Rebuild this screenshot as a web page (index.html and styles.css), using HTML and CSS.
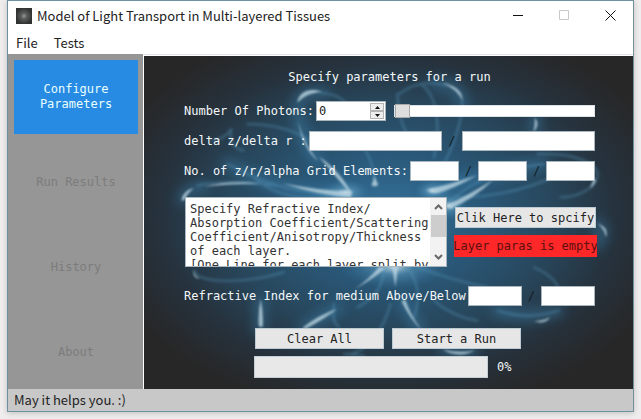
FILE: index.html
```html
<!DOCTYPE html>
<html lang="en">
<head>
<meta charset="utf-8">
<title>Model of Light Transport in Multi-layered Tissues</title>
<link rel="stylesheet" href="styles.css">
</head>
<body>
<div class="window">
  <header class="titlebar">
    <svg class="app-icon" viewBox="0 0 16 16" aria-hidden="true">
      <defs><radialGradient id="glow"><stop offset="0" stop-color="#a4a4a4"/><stop offset=".25" stop-color="#666"/><stop offset="1" stop-color="#303232"/></radialGradient></defs>
      <rect width="16" height="16" fill="url(#glow)"/>
    </svg>
    <h1 class="title">Model of Light Transport in Multi-layered Tissues</h1>
    <div class="caption-buttons">
      <button class="caption" type="button" aria-label="Minimize"><svg viewBox="0 0 11 11"><path d="M0 5.500H10" stroke="#111"/></svg></button>
      <button class="caption" type="button" aria-label="Maximize" disabled><svg viewBox="0 0 11 11"><path d="M.5 .5H9.500V9.500H.5Z" stroke="#c8c8cc"/></svg></button>
      <button class="caption" type="button" aria-label="Close"><svg viewBox="0 0 11 11"><path d="M.5 .5L10.500 10.500M10.500 .5L.5 10.500" stroke="#111"/></svg></button>
    </div>
  </header>
  <nav class="menubar"><button class="menu" type="button">File</button><button class="menu" type="button">Tests</button></nav>
  <div class="content">
    <nav class="sidebar">
      <button class="tab active" type="button">Configure<br>Parameters</button>
      <button class="tab" type="button" disabled>Run Results</button>
      <button class="tab" type="button" disabled>History</button>
      <button class="tab" type="button" disabled>About</button>
    </nav>
    <main class="panel">
      <svg class="backdrop" viewBox="0 6 1467 999" preserveAspectRatio="none" aria-hidden="true">
        <defs>
          <radialGradient id="base" cx=".5" cy=".48" r=".6">
            <stop offset="0" stop-color="#35739c"/><stop offset=".3" stop-color="#2a597a"/><stop offset=".55" stop-color="#28485e"/><stop offset=".78" stop-color="#26323d"/><stop offset="1" stop-color="#272727"/>
          </radialGradient>
          <radialGradient id="hot"><stop offset="0" stop-color="#d4e6ef" stop-opacity=".85"/><stop offset=".35" stop-color="#68a6c8" stop-opacity=".45"/><stop offset="1" stop-color="#397ca5" stop-opacity="0"/></radialGradient>
          <filter id="wide" x="-20%" y="-20%" width="140%" height="140%"><feGaussianBlur stdDeviation="18"/></filter>
          <filter id="faint" x="-20%" y="-20%" width="140%" height="140%"><feGaussianBlur stdDeviation="4"/></filter>
          <filter id="soft" x="-20%" y="-20%" width="140%" height="140%"><feGaussianBlur stdDeviation="2.500"/></filter>
        </defs>
        <rect y="6" width="1467" height="999" fill="url(#base)"/>
        <g fill="none" stroke="#3c87b5" stroke-width="34" stroke-linecap="round" opacity=".42" filter="url(#wide)">
          <path d="M460 150Q475 105 540 118M462 180C470 240 500 290 520 318M250 330C380 400 500 420 620 425M860 410C950 380 1100 340 1200 330M870 90Q950 90 955 150M350 740L348 830M480 820L580 765M780 740Q800 790 830 830M1360 510Q1390 530 1360 570M900 890Q950 905 990 890M115 435Q130 405 180 400M1175 190L1172 230M1060 770Q1150 800 1245 770"/>
        </g>
        <ellipse cx="605" cy="415" rx="75" ry="40" fill="url(#hot)"/>
        <ellipse cx="866" cy="411" rx="55" ry="35" fill="url(#hot)"/>
        <ellipse cx="915" cy="455" rx="55" ry="45" fill="url(#hot)"/>
        <ellipse cx="750" cy="640" rx="160" ry="65" fill="url(#hot)"/>
        <g fill="none" stroke="#5c9dc2" stroke-width="6" stroke-linecap="round" opacity=".45" filter="url(#faint)">
          <path d="M530 116Q580 120 605 145M310 210Q430 212 495 260M200 260Q245 255 262 225M262 225Q250 280 300 290M160 395C230 378 320 385 400 395M250 330C380 405 500 420 620 430M330 370Q400 440 550 430M765 120Q830 70 910 95M830 90C890 130 885 240 870 310M955 140C955 210 925 280 900 330M760 120Q765 230 820 280M665 290Q690 330 692 390M920 440Q1020 350 1200 330M1180 300C1290 295 1370 330 1360 370C1350 405 1300 430 1250 430M940 430Q1100 430 1250 360M150 650C165 690 300 690 420 655M720 640Q720 720 640 760M790 640Q840 700 810 790M820 640Q930 680 1030 700M570 750Q560 800 585 820M740 750Q700 880 620 900M870 740Q930 790 1000 800M1060 770Q1150 800 1245 770M1170 640Q1240 670 1250 720M600 900L660 905"/>
        </g>
        <g fill="#bcd6e2" opacity=".8" filter="url(#soft)">
          <path d="M460 146C464 112 500 100 534 114C504 116 482 124 460 146ZM462 200C474 250 500 295 524 322C494 300 470 255 462 200ZM525 308Q592 352 626 426Q590 385 525 308ZM415 388Q520 410 624 412L620 430Q520 424 415 388ZM180 398Q260 378 350 389Q260 388 180 398ZM845 408Q925 390 1000 364Q925 406 880 418ZM905 455Q980 420 1050 376Q985 438 920 464ZM895 86Q956 98 956 140Q940 106 895 86ZM1172 190Q1190 212 1168 234Q1174 214 1172 190ZM690 365Q696 378 703 392Q693 402 682 393Q690 382 690 365ZM1360 508Q1396 522 1386 550Q1382 526 1360 508ZM112 440Q115 410 150 402Q128 420 122 438ZM705 640L725 642Q680 680 634 704Q675 676 705 640ZM745 640H762L754 700ZM350 735Q359 780 356 818L345 818Q341 780 350 735ZM475 822Q520 784 580 764Q540 796 485 824ZM772 740L784 738Q800 785 834 830Q796 792 772 740ZM895 886Q950 900 994 888Q945 916 895 886ZM1170 802Q1200 800 1218 790Q1206 812 1170 802ZM150 648Q150 668 168 674Q144 672 150 648ZM1350 372Q1364 380 1338 404Z"/>
        </g>
      </svg>
      <form class="form">
        <h2 class="heading">Specify parameters for a run</h2>
        <div class="row">
          <label for="photons">Number Of Photons:</label>
          <span class="spin">
            <input id="photons" class="spin-value" type="text" inputmode="numeric" value="0">
            <span class="steps">
              <button type="button" class="step" aria-label="Increase"><svg viewBox="0 0 5 3"><path d="M0 3L2.500 0L5 3Z"/></svg></button>
              <button type="button" class="step" aria-label="Decrease"><svg viewBox="0 0 5 3"><path d="M0 0L2.500 3L5 0Z"/></svg></button>
            </span>
          </span>
          <input class="slider" type="range" min="0" max="100" value="0" aria-label="Number Of Photons">
        </div>
        <div class="row">
          <label for="dz">delta z/delta r :</label>
          <input id="dz" class="field" type="text"><span class="slash">/</span><input class="field" type="text" aria-label="delta r">
        </div>
        <div class="row">
          <label for="nz">No. of z/r/alpha Grid Elements:</label>
          <input id="nz" class="field" type="text"><span class="slash">/</span><input class="field" type="text" aria-label="r elements"><span class="slash">/</span><input class="field" type="text" aria-label="alpha elements">
        </div>
        <div class="layers">
          <div class="notes">
            <textarea class="notes-text" aria-label="Layer parameters" readonly>Specify Refractive Index/
Absorption Coefficient/Scattering
Coefficient/Anisotropy/Thickness
of each layer.
[One Line for each layer split by</textarea>
            <div class="scrollbar">
              <svg viewBox="0 0 9 6"><path d="M1 5L4.500 1.500L8 5"/></svg>
              <span class="thumb"></span>
              <svg viewBox="0 0 9 6"><path d="M1 1L4.500 4.500L8 1"/></svg>
            </div>
          </div>
          <div class="layer-actions">
            <button class="button specify" type="button">Clik Here to spcify</button>
            <output class="alert">Layer paras is empty</output>
          </div>
        </div>
        <div class="row medium">
          <label for="above">Refractive Index for medium Above/Below</label>
          <input id="above" class="field" type="text"><span class="slash">/</span><input class="field" type="text" aria-label="Below">
        </div>
        <div class="run">
          <div class="actions">
            <button class="button" type="button">Clear All</button>
            <button class="button" type="button">Start a Run</button>
          </div>
          <div class="progress-row">
            <progress id="progress" class="progress" value="0" max="100"></progress>
            <label for="progress">0%</label>
          </div>
        </div>
      </form>
    </main>
  </div>
  <footer class="status">May it helps you. :)</footer>
</div>
</body>
</html>
```
FILE: styles.css
```css
* { box-sizing: border-box; }
html, body { height: 100%; }
body {
  margin: 0;
  padding: 0 7px 7px;
  background: #efeded;
  color: #222;
  font-family: "Noto Sans CJK SC", "Noto Sans", sans-serif;
  font-size: 13px;
}
button, input, textarea { font: inherit; color: inherit; margin: 0; border-radius: 0; }
button { border: 0; padding: 0; background: none; }

.window {
  display: flex;
  flex-direction: column;
  height: 100%;
  border: 1px solid #6f909e;
  background: #fff;
  box-shadow: 0 1px 6px #0003;
}
.titlebar { display: flex; align-items: center; height: 29px; padding-left: 8px; }
.app-icon { width: 16px; height: 16px; margin-right: 5px; }
.title { flex: 1; margin: 0; font-size: 13px; font-weight: 400; white-space: nowrap; }
.caption-buttons { display: flex; }
.caption { display: grid; place-items: center; width: 46px; height: 28px; }
.caption svg { width: 11px; height: 11px; fill: none; }
.menubar { display: flex; gap: 16px; height: 24px; padding-left: 8px; }
.content { display: flex; flex: 1; min-height: 0; }

.sidebar {
  display: grid;
  grid-auto-rows: 1fr;
  gap: 11px;
  flex: 0 0 135px;
  padding: 6px 5px 0 6px;
  background: #969696;
}
.tab, .panel {
  font-family: "DejaVu Sans Mono", "Liberation Mono", monospace;
  font-size: 12px;
  line-height: 14px;
}
.tab { color: #7c7c7c; line-height: 15px; }
.tab.active { background: #278be3; color: #eaffff; }

.panel {
  position: relative;
  flex: 1;
  min-width: 0;
  margin-left: 1px;
  border-top: 1px solid #dfe3e8;
  box-shadow: inset 0 1px #fff;
  color: #f4f8fa;
}
.backdrop { position: absolute; inset: 1px 0 0; width: 100%; height: calc(100% - 1px); }
.form {
  position: relative;
  display: flex;
  flex-direction: column;
  gap: 10px;
  padding: 15px 38px 11px 40px;
}
.heading { margin: 0 0 7px; font-size: 12px; font-weight: 400; line-height: 14px; text-align: center; }
.row { display: flex; align-items: center; gap: 6px; height: 20px; white-space: nowrap; }
.row label { margin-right: -4px; }
.field {
  flex: 1;
  min-width: 0;
  height: 20px;
  border: 1px solid #a9b6bd;
  background: #fff;
  color: #222;
}
.slash { color: #101c25; }

.spin { display: flex; flex: 0 0 70px; min-width: 0; height: 20px; padding: 1px; border: 1px solid #a9b6bd; background: #fff; }
.spin-value { flex: 1; width: 0; min-width: 0; border: 0; padding: 0 1px; background: none; color: #222; }
.steps { display: grid; grid-template-rows: 1fr 1fr; width: 14px; }
.step { display: grid; place-items: center; border: 1px solid #b4b4b4; background: #eee; }
.step svg { width: 5px; height: 3px; fill: #111; }
.slider { flex: 1; min-width: 0; height: 12px; margin-left: 2px; appearance: none; background: #fff; border: 1px solid #dbe3e7; }
.slider::-webkit-slider-thumb { appearance: none; width: 15px; height: 14px; border: 1px solid #aaa; background: #dedede; }

.layers { display: flex; gap: 7px; height: 70px; margin: 6px -2px 0 1px; }
.notes { display: flex; flex: 1; min-width: 0; border: 1px solid #a9b6bd; background: #fff; }
.notes-text {
  flex: 1;
  min-width: 0;
  padding: 4px 0 0 4px;
  border: 0;
  background: none;
  color: #333;
  resize: none;
  overflow: hidden;
  white-space: pre;
}
.scrollbar { display: flex; flex-direction: column; align-items: center; gap: 5px; flex: 0 0 16px; padding: 6px 0; background: #f2f2f2; }
.scrollbar svg { width: 9px; height: 6px; fill: none; stroke: #666; stroke-width: 2; }
.scrollbar svg:last-child { margin-top: auto; }
.thumb { width: 15px; height: 22px; background: #cdcdcd; }
.layer-actions { display: flex; flex-direction: column; gap: 7px; flex: 0 0 143px; min-width: 0; padding-top: 10px; }
.button { height: 21px; border: 1px solid #bccbd3; background: #e6e6e6; color: #222; white-space: nowrap; }
.specify { margin: 0 1px; }
.alert { display: flex; align-items: center; justify-content: center; height: 22px; background: #ff2727; color: #5a1010; white-space: nowrap; }
.medium { margin-top: 9px; }

.run { display: flex; flex-direction: column; gap: 7px; margin-top: 12px; padding: 0 74px 0 70px; }
.actions { display: flex; gap: 8px; padding-left: 1px; }
.actions .button { flex: 1; }
.progress-row { display: flex; align-items: center; gap: 9px; height: 22px; }
.progress { flex: 0 0 234px; height: 22px; appearance: none; border: 1px solid #c4ced4; background: #e8e8e8; }
.progress::-webkit-progress-bar { background: #e8e8e8; }

.status { height: 22px; padding-left: 6px; background: #c8c8c8; line-height: 22px; }
```
